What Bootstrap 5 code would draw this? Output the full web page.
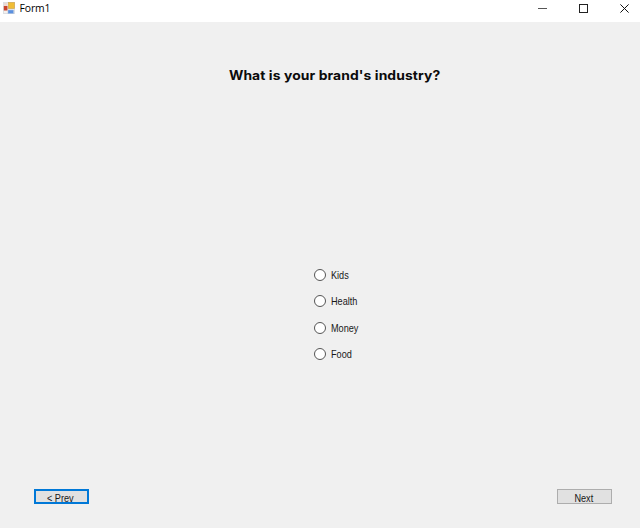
<!DOCTYPE html>
<html lang="en">
<head>
<meta charset="utf-8">
<meta name="viewport" content="width=device-width, initial-scale=1">
<title>Form1</title>
<link href="https://cdn.jsdelivr.net/npm/bootstrap@5.3.0/dist/css/bootstrap.min.css" rel="stylesheet">
<style>
body{font-family:"Liberation Sans",Arial,sans-serif;background:#f0f0f0;color:#181818;height:528px;font-size:10.5px;line-height:14px}
.titlebar{height:22px;background:#fff;padding:0 11px 0 3px}
.app-icon{margin-top:2px}
.caption-text{font:10.4px/16px "Open Sans","Noto Sans",sans-serif;letter-spacing:-.1px;color:#000;margin-left:4.5px}
.win-buttons{gap:32px;height:17px}
.question{font:700 12.8px/18px Inter,sans-serif;letter-spacing:.1px;margin:45px 0 0 29px;color:#0b0b0b;white-space:nowrap}
.question span{display:inline-block;transform:scaleX(1.083)}
.choices{margin:183px 0 0 314px;gap:12.3px}
.choice{height:14px;gap:5px}
.choice .form-check-input{width:12px;height:12px;margin:0;border:1px solid #555;background-color:#fff;flex:none}
.narrow{display:inline-block;transform:scaleX(.87);transform-origin:left}
.footer-row{padding:0 28px 24px 34px}
.btn.win{width:55px;height:15px;padding:2px 0 0 0;border:1px solid #adadad;border-radius:0;background:#e1e1e1;font-size:10.5px;line-height:12px;color:#181818}
.btn.win .narrow{transform-origin:center;margin-left:-2px}
.btn.win.focused{border:2px solid #0078d7;padding:1px 0 0 0}
</style>
<script defer src="https://cdn.jsdelivr.net/npm/bootstrap@5.3.0/dist/js/bootstrap.bundle.min.js"></script>
</head>
<body class="d-flex flex-column overflow-hidden">
<header class="titlebar d-flex justify-content-between align-items-start flex-shrink-0">
  <div class="d-flex">
    <svg class="app-icon" width="12" height="12" viewBox="0 0 12 12">
      <rect x="0.5" y="0.5" width="11" height="11" fill="#f4f1ee" stroke="#dcdfe3"/>
      <rect x="1" y="1" width="3.5" height="3" fill="#ecd9d2"/>
      <rect x="0.8" y="4" width="3.7" height="4.5" fill="#c8432d"/>
      <rect x="5.3" y="0.5" width="6.2" height="6" fill="#f0bd35" stroke="#d0a750" stroke-width=".7"/>
      <rect x="5" y="8" width="5.5" height="3.5" fill="#5a90e0" stroke="#a5bddd" stroke-width=".6"/>
    </svg>
    <span class="caption-text">Form1</span>
  </div>
  <div class="win-buttons d-flex align-items-center">
    <svg width="9" height="9"><path d="M0 4.5H9" stroke="#555"/></svg>
    <svg width="9" height="9"><rect x=".5" y=".5" width="8" height="8" fill="none" stroke="#222"/></svg>
    <svg width="9" height="9"><path d="M.4.4 8.6 8.6M8.6.4.4 8.6" stroke="#111"/></svg>
  </div>
</header>
<main class="d-flex flex-column flex-grow-1">
  <h1 class="question text-center"><span>What is your brand's industry?</span></h1>
  <div class="choices d-flex flex-column">
    <label class="choice d-flex align-items-center"><input class="form-check-input rounded-circle" type="radio" name="industry"><span class="narrow">Kids</span></label>
    <label class="choice d-flex align-items-center"><input class="form-check-input rounded-circle" type="radio" name="industry"><span class="narrow">Health</span></label>
    <label class="choice d-flex align-items-center"><input class="form-check-input rounded-circle" type="radio" name="industry"><span class="narrow">Money</span></label>
    <label class="choice d-flex align-items-center"><input class="form-check-input rounded-circle" type="radio" name="industry"><span class="narrow">Food</span></label>
  </div>
  <div class="footer-row d-flex justify-content-between mt-auto">
    <button type="button" class="btn win focused"><span class="narrow">&lt; Prev</span></button>
    <button type="button" class="btn win"><span class="narrow">Next</span></button>
  </div>
</main>
</body>
</html>
